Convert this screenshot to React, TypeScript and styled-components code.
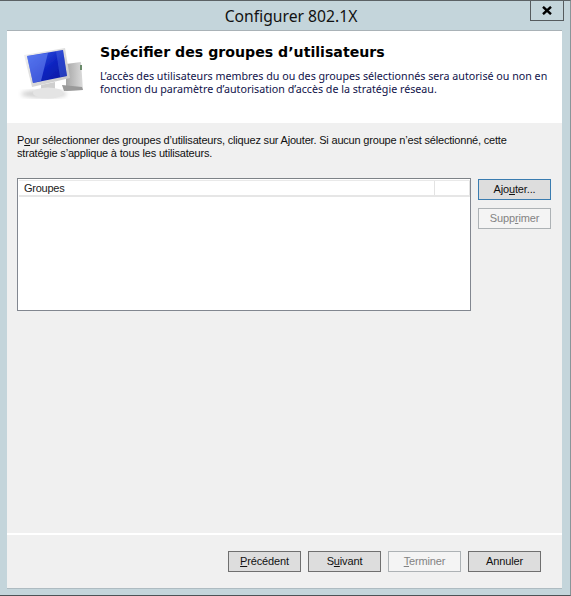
import React from "react";
import styled, { createGlobalStyle } from "styled-components";

const Global = createGlobalStyle`
  html, body { margin: 0; padding: 0; }
  body { background: #c4d5db; font-family: "Liberation Sans", sans-serif; }
  u { text-underline-offset: 1px; text-decoration-thickness: 1px; }
`;
const Frame = styled.div`
  width: 571px; height: 596px; box-sizing: border-box; position: relative;
  background: #c4d5db; display: flex; flex-direction: column;
  border-top: 1px solid #5c6265; border-bottom: 1px solid #4d5356; border-right: 1px solid #8a9599;
  padding: 0 7px 7px 7px; overflow: hidden;
`;
const TitleBar = styled.div`
  height: 29px; flex: none; display: flex; align-items: center; justify-content: center;
  font: 15.7px "Noto Sans", sans-serif; color: #111; padding-left: 12px;
`;
const CloseButton = styled.div`
  position: absolute; top: -1px; right: 6px; width: 34px; height: 21px; box-sizing: border-box;
  border: 1px solid #565b5e; display: flex; align-items: center; justify-content: center;
`;
const Client = styled.div`
  flex: 1; width: 555px; background: #f0f0f0; display: flex; flex-direction: column;
  border-top: 1px solid #a9b2b7; box-shadow: 0 1px 0 #aebbc1;
`;
const Header = styled.header`
  height: 92px; flex: none; background: #fff; display: flex; box-sizing: border-box;
`;
const IconSlot = styled.div`
  width: 93px; flex: none; padding: 16px 0 0 11px; box-sizing: border-box;
`;
const HeaderText = styled.div`
  display: flex; flex-direction: column; padding-top: 11px;
`;
const Heading = styled.h1`
  margin: 0; font: bold 14.15px/20px "DejaVu Sans", sans-serif; color: #000; white-space: nowrap;
`;
const Lead = styled.p`
  margin: 8px 0 0; font: 10.7px/13px "Noto Sans", sans-serif; color: #10124a; white-space: pre;
`;
const Body = styled.main`
  flex: 1; padding: 11px 10px 0; display: flex; flex-direction: column;
`;
const Hint = styled.div`
  font: 11px/13px "Liberation Sans", sans-serif; letter-spacing: -0.19px; color: #111; white-space: nowrap;
`;
const Row = styled.div`
  display: flex; gap: 7px; margin-top: 18px;
`;
const List = styled.div`
  width: 454px; height: 133px; box-sizing: border-box; background: #fff;
  border: 1px solid #828790; border-top-color: #7d8287; padding: 1px 0 0;
`;
const ListHead = styled.div`
  height: 17px; box-sizing: border-box; display: flex; border-bottom: 2px solid #e6e6e6;
  border-top: 1px solid #e9e9e9; margin-left: 1px;
`;
const HeadCell = styled.div<{ $w: number }>`
  width: ${p => p.$w}px; box-sizing: border-box; padding-left: 5px; border-right: 1px solid #e3e3e3;
  font: 11px/15px "Liberation Sans", sans-serif; letter-spacing: -0.25px; color: #222;
`;
const Side = styled.div`
  display: flex; flex-direction: column; gap: 8px; padding-top: 1px;
`;
const Btn = styled.button<{ $focus?: boolean }>`
  width: 73px; height: 21px; box-sizing: border-box; padding: 0; margin: 0;
  border: 1px solid ${p => p.$focus ? "#3a7cb0" : "#6f6f6f"};
  background: #dddddd; color: #111; font: 11px/17px "Liberation Sans", sans-serif; letter-spacing: -0.15px;
  &:disabled { background: #f4f4f4; border-color: #adb2b5; color: #838383; }
`;
const Separator = styled.div`
  height: 2px; flex: none; background: #fff; margin-top: auto;
`;
const Footer = styled.footer`
  height: 53px; flex: none; box-sizing: border-box; padding: 16px 21px 0 0;
  display: flex; justify-content: flex-end; gap: 7px;
`;

const MonitorIcon = () => (
  <svg width="66" height="56" viewBox="0 0 66 56">
    <defs>
      <linearGradient id="scr" x1="0" y1="0" x2="1" y2="1">
        <stop offset="0" stopColor="#3f64ee" />
        <stop offset="0.55" stopColor="#0c22bf" />
        <stop offset="1" stopColor="#0a1a9a" />
      </linearGradient>
      <linearGradient id="bez" x1="0" y1="0" x2="1" y2="1">
        <stop offset="0" stopColor="#f4f4f4" />
        <stop offset="1" stopColor="#c4c4c4" />
      </linearGradient>
      <linearGradient id="tower" x1="0" y1="0" x2="1" y2="0">
        <stop offset="0" stopColor="#a6a6a6" />
        <stop offset="1" stopColor="#dcdcdc" />
      </linearGradient>
      <filter id="soft"><feGaussianBlur stdDeviation="0.5" /></filter>
      <filter id="shadow"><feGaussianBlur stdDeviation="2" /></filter>
    </defs>
    <ellipse cx="26" cy="47" rx="23" ry="4" fill="#9a9a9a" opacity="0.45" filter="url(#shadow)" />
    <g filter="url(#soft)">
      <path d="M48 17 L63 15 L65 43 L48 44 Z" fill="url(#tower)" />
      <rect x="62" y="18" width="2" height="5" fill="#6a8a6a" />
      <path d="M6 8 L47 1 L52 31 L14 40 Z" fill="url(#bez)" />
      <path d="M9 9 L45 3 L49 29 L15 36 Z" fill="url(#scr)" />
      <path d="M9 9 L30 6 L23 34 L15 36 Z" fill="#6f8df6" opacity="0.55" />
      <path d="M38 4 L45 3 L49 29 L42 30 Z" fill="#5f7fe8" opacity="0.35" />
      <path d="M23 38 L37 35 L37 43 L23 45 Z" fill="#cfcfcf" />
      <ellipse cx="30" cy="46" rx="15" ry="5.5" fill="#e4e4e4" />
      <path d="M44 38 L64 40 L65 43 L46 44 Z" fill="#9a9a9a" />
    </g>
  </svg>
);

const CloseGlyph = () => (
  <svg width="10" height="9" viewBox="0 0 10 9">
    <path d="M1 0.8 L9 8.2 M9 0.8 L1 8.2" stroke="#000" strokeWidth="2.4" />
  </svg>
);

export default function App() {
  return (
    <>
      <Global />
      <Frame>
        <TitleBar>Configurer 802.1X</TitleBar>
        <CloseButton><CloseGlyph /></CloseButton>
        <Client>
          <Header>
            <IconSlot><MonitorIcon /></IconSlot>
            <HeaderText>
              <Heading>Spécifier des groupes d’utilisateurs</Heading>
              <Lead>{"L’accès des utilisateurs membres du ou des groupes sélectionnés sera autorisé ou non en\nfonction du paramètre d’autorisation d’accès de la stratégie réseau."}</Lead>
            </HeaderText>
          </Header>
          <Body>
            <Hint>P<u>o</u>ur sélectionner des groupes d’utilisateurs, cliquez sur Ajouter. Si aucun groupe n’est sélectionné, cette<br />stratégie s’applique à tous les utilisateurs.</Hint>
            <Row>
              <List>
                <ListHead>
                  <HeadCell $w={417}>Groupes</HeadCell>
                  <HeadCell $w={35} />
                </ListHead>
              </List>
              <Side>
                <Btn $focus>Ajo<u>u</u>ter...</Btn>
                <Btn disabled>Supp<u>r</u>imer</Btn>
              </Side>
            </Row>
          </Body>
          <Separator />
          <Footer>
            <Btn><u>P</u>récédent</Btn>
            <Btn>S<u>u</u>ivant</Btn>
            <Btn disabled><u>T</u>erminer</Btn>
            <Btn>Annuler</Btn>
          </Footer>
        </Client>
      </Frame>
    </>
  );
}
